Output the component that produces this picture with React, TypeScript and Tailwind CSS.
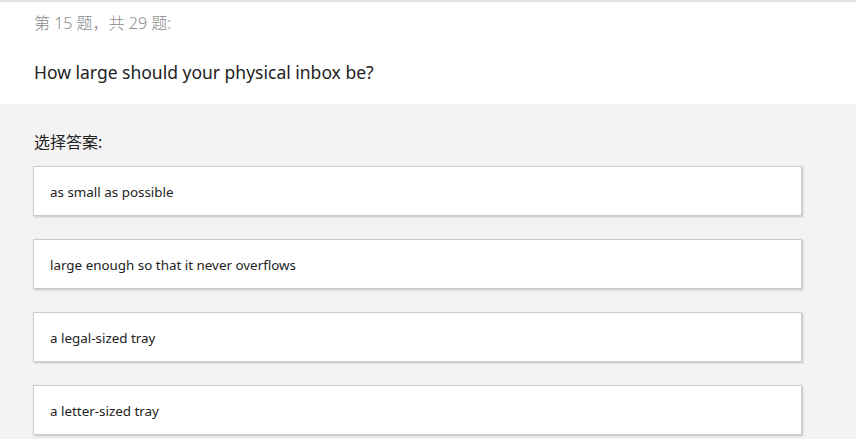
const options = [
  'as small as possible',
  'large enough so that it never overflows',
  'a legal-sized tray',
  'a letter-sized tray',
];

export default function App() {
  return (
    <div
      className="w-[856px] h-[439px] overflow-hidden bg-[#f3f3f3]"
      style={{ fontFamily: '"Noto Sans", "Noto Sans CJK SC", sans-serif' }}
    >
      {/* Header */}
      <div className="bg-white border-t-2 border-[#e3e3e3] pl-[34px] pt-[10px] h-[104px]">
        <p className="text-[16px] leading-[22px] font-light text-[#8a8a8a]">第 15 题，共 29 题:</p>
        <h1 className="mt-[26px] text-[17.5px] leading-[24px] text-[#222]">
          How large should your physical inbox be?
        </h1>
      </div>

      {/* Answers */}
      <div className="pl-[33px] pr-[54px] pt-[27px]">
        <p className="text-[16px] leading-[22px] text-[#222] mb-[13px] pl-[1px]">选择答案:</p>
        <div className="flex flex-col gap-[23px]">
          {options.map((opt) => (
            <div
              key={opt}
              className="h-[50px] bg-white border border-[#cccccc] shadow-[1px_1px_2px_rgba(0,0,0,0.2)] flex items-center pl-[16px] pt-[3px] text-[13.4px] text-[#222]"
            >
              {opt}
            </div>
          ))}
        </div>
      </div>
    </div>
  );
}
